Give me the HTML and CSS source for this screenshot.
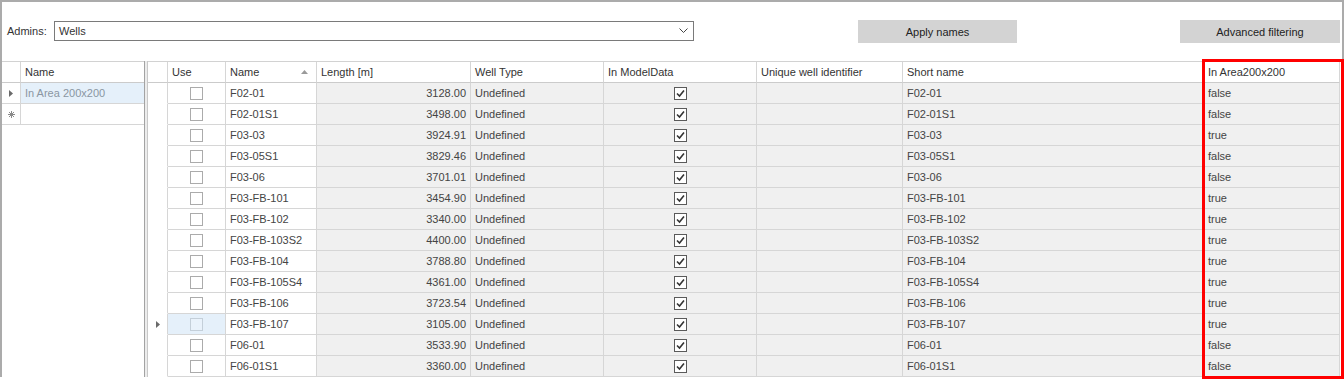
FILE: index.html
```html
<!DOCTYPE html>
<html lang="en">
<head>
    <meta charset="UTF-8">
    <title>Wells</title>
    <link rel="stylesheet" href="styles.css">
</head>
<body>
<div class="window">
    <!-- top toolbar -->
    <div class="toolbar">
        <label class="admins-label">Admins:</label>
        <div class="combo">
            <span>Wells</span>
            <svg class="chevron" width="9" height="6" viewBox="0 0 9 6"><polyline points="0.5,0.5 4.5,4.5 8.5,0.5" fill="none" stroke="#444" stroke-width="1"/></svg>
        </div>
        <button class="tool-btn apply-btn">Apply names</button>
        <button class="tool-btn filter-btn">Advanced filtering</button>
    </div>

    <div class="panes">
        <!-- admin list -->
        <div class="left-pane">
            <table class="grid admin-grid">
                <colgroup><col class="c-rh-left"><col class="c-admin-name"></colgroup>
                <thead>
                <tr><th class="rh"></th><th>Name</th></tr>
                </thead>
                <tbody>
                <tr>
                    <td class="rh"><svg class="row-mark" width="4" height="7" viewBox="0 0 4 7"><polygon points="0,0 4,3.5 0,7" fill="#6a6a6a"/></svg></td>
                    <td class="sel faded">In Area 200x200</td>
                </tr>
                <tr>
                    <td class="rh"><svg class="new-mark" width="7" height="7" viewBox="0 0 7 7"><g stroke="#8a8a8a" stroke-width="1"><line x1="3.5" y1="0" x2="3.5" y2="7"/><line x1="0" y1="3.5" x2="7" y2="3.5"/><line x1="1" y1="1" x2="6" y2="6"/><line x1="6" y1="1" x2="1" y2="6"/></g></svg></td>
                    <td></td>
                </tr>
                </tbody>
            </table>
        </div>

        <div class="splitter"></div>

        <!-- well list -->
        <div class="right-pane">
            <table class="grid well-grid">
                <colgroup>
                    <col class="c-rh"><col class="c-use"><col class="c-name"><col class="c-length">
                    <col class="c-type"><col class="c-model"><col class="c-uwi"><col class="c-short"><col class="c-area">
                </colgroup>
                <thead>
                <tr>
                    <th class="rh"></th>
                    <th>Use</th>
                    <th><div class="th-sort"><span>Name</span><svg width="7" height="4" viewBox="0 0 7 4"><polygon points="0,4 3.5,0 7,4" fill="#9a9a9a"/></svg></div></th>
                    <th>Length [m]</th>
                    <th>Well Type</th>
                    <th>In ModelData</th>
                    <th>Unique well identifier</th>
                    <th>Short name</th>
                    <th>In Area200x200</th>
                </tr>
                </thead>
                <tbody id="wellBody">
                <!-- filled by script -->
                </tbody>
            </table>
        </div>
    </div>
</div>

<div class="highlight-box"></div>

<script>
    const wells = [
        ['F02-01', '3128.00', 'false'],
        ['F02-01S1', '3498.00', 'false'],
        ['F03-03', '3924.91', 'true'],
        ['F03-05S1', '3829.46', 'false'],
        ['F03-06', '3701.01', 'false'],
        ['F03-FB-101', '3454.90', 'true'],
        ['F03-FB-102', '3340.00', 'true'],
        ['F03-FB-103S2', '4400.00', 'true'],
        ['F03-FB-104', '3788.80', 'true'],
        ['F03-FB-105S4', '4361.00', 'true'],
        ['F03-FB-106', '3723.54', 'true'],
        ['F03-FB-107', '3105.00', 'true'],
        ['F06-01', '3533.90', 'false'],
        ['F06-01S1', '3360.00', 'false']
    ];
    const currentRow = 11;
    const checkMark = '<span class="chk checked"><svg width="11" height="11" viewBox="0 0 11 11"><polyline points="2,5.5 4.5,8 9,2.5" fill="none" stroke="#333" stroke-width="1.6"/></svg></span>';
    const rowMark = '<svg class="row-mark" width="4" height="7" viewBox="0 0 4 7"><polygon points="0,0 4,3.5 0,7" fill="#6a6a6a"/></svg>';

    const body = document.getElementById('wellBody');
    wells.forEach(([name, length, inArea], i) => {
        const row = document.createElement('tr');
        const current = i === currentRow;
        row.innerHTML = `
            <td class="rh">${current ? rowMark : ''}</td>
            <td class="center${current ? ' sel' : ''}"><span class="chk"></span></td>
            <td>${name}</td>
            <td class="ro num">${length}</td>
            <td class="ro">Undefined</td>
            <td class="ro center">${checkMark}</td>
            <td class="ro"></td>
            <td class="ro">${name}</td>
            <td class="ro">${inArea}</td>`;
        body.appendChild(row);
    });
</script>
</body>
</html>
```

FILE: styles.css
```css
/* base */
body {
    margin: 0;
    font-family: "Liberation Sans", Arial, sans-serif;
    font-size: 11px;
    color: #333;
    background-color: #fff;
}
.window {
    width: 1344px;
    box-sizing: border-box;
    border: 2px solid #ababab;
    border-bottom: none;
    display: flex;
    flex-direction: column;
}

/* toolbar */
.toolbar {
    height: 59px;
    box-sizing: border-box;
    padding: 18px 0 0 5px;
    display: flex;
    align-items: flex-start;
}
.admins-label {
    width: 47px;
    line-height: 20px;
    margin-top: 1px;
}
.combo {
    width: 640px;
    height: 20px;
    margin-top: 1px;
    box-sizing: border-box;
    border: 1px solid #7a7a7a;
    padding: 0 5px 0 4px;
    display: flex;
    align-items: center;
    justify-content: space-between;
    background-color: #fff;
}
.tool-btn {
    height: 23px;
    padding: 0;
    border: none;
    background-color: #d3d3d3;
    font: inherit;
    color: #222;
}
.apply-btn {
    width: 159px;
    margin-left: 164px;
}
.filter-btn {
    width: 160px;
    margin-left: 163px;
}

/* panes */
.panes {
    display: flex;
}
.left-pane {
    width: 142px;
}
.splitter {
    width: 4px;
    box-sizing: border-box;
    border-left: 1px solid #a3a3a3;
    border-right: 1px solid #c8c8c8;
    background-color: #ececec;
}
.right-pane {
    flex: 1;
}

/* grids */
.grid {
    border-collapse: separate;
    border-spacing: 0;
    table-layout: fixed;
    border-top: 1px solid #d2d2d2;
}
.admin-grid { width: 142px; }
.well-grid { width: 1192px; }
.grid tr { height: 21px; }
.grid th, .grid td {
    padding: 0 4px;
    border-right: 1px solid #d6d6d6;
    border-bottom: 1px solid #d6d6d6;
    white-space: nowrap;
    overflow: hidden;
    text-align: left;
    font-weight: normal;
    line-height: 13px;
    color: #444;
}
.grid th {
    color: #333;
    border-bottom-color: #cbcbcb;
}
.grid td.rh, .grid th.rh {
    padding: 0;
    text-align: center;
}
.well-grid td.rh { border-bottom-color: transparent; }
.admin-grid td:last-child, .admin-grid th:last-child { border-right: none; }

.c-rh-left { width: 19px; }
.c-admin-name { width: 123px; }
.c-rh { width: 20px; }
.c-use { width: 58px; }
.c-name { width: 91px; }
.c-length { width: 154px; }
.c-type { width: 133px; }
.c-model { width: 153px; }
.c-uwi { width: 146px; }
.c-short { width: 301px; }
.c-area { width: 136px; }

.th-sort {
    display: flex;
    align-items: center;
    justify-content: space-between;
    padding-right: 4px;
}
.ro {
    background-color: #f0f0f0;
    color: #555;
}
.grid td.num { text-align: right; }
.grid td.center { text-align: center; }
.sel { background-color: #e5f0fa; }
.faded { color: #8a96a2 !important; }
.row-mark, .new-mark { vertical-align: middle; }

/* check boxes */
.chk {
    display: inline-block;
    width: 13px;
    height: 13px;
    box-sizing: border-box;
    border: 1px solid #ababab;
    background-color: #fff;
    vertical-align: middle;
}
.chk svg { display: block; }
.chk.checked { border-color: #5a5a5a; }
.sel .chk {
    border-color: #c4cfd9;
    background-color: #e9f2fb;
}

/* annotation frame */
.highlight-box {
    position: absolute;
    left: 1202px;
    top: 59px;
    width: 142px;
    height: 320px;
    box-sizing: border-box;
    border: 3px solid #f00;
    pointer-events: none;
}
```
